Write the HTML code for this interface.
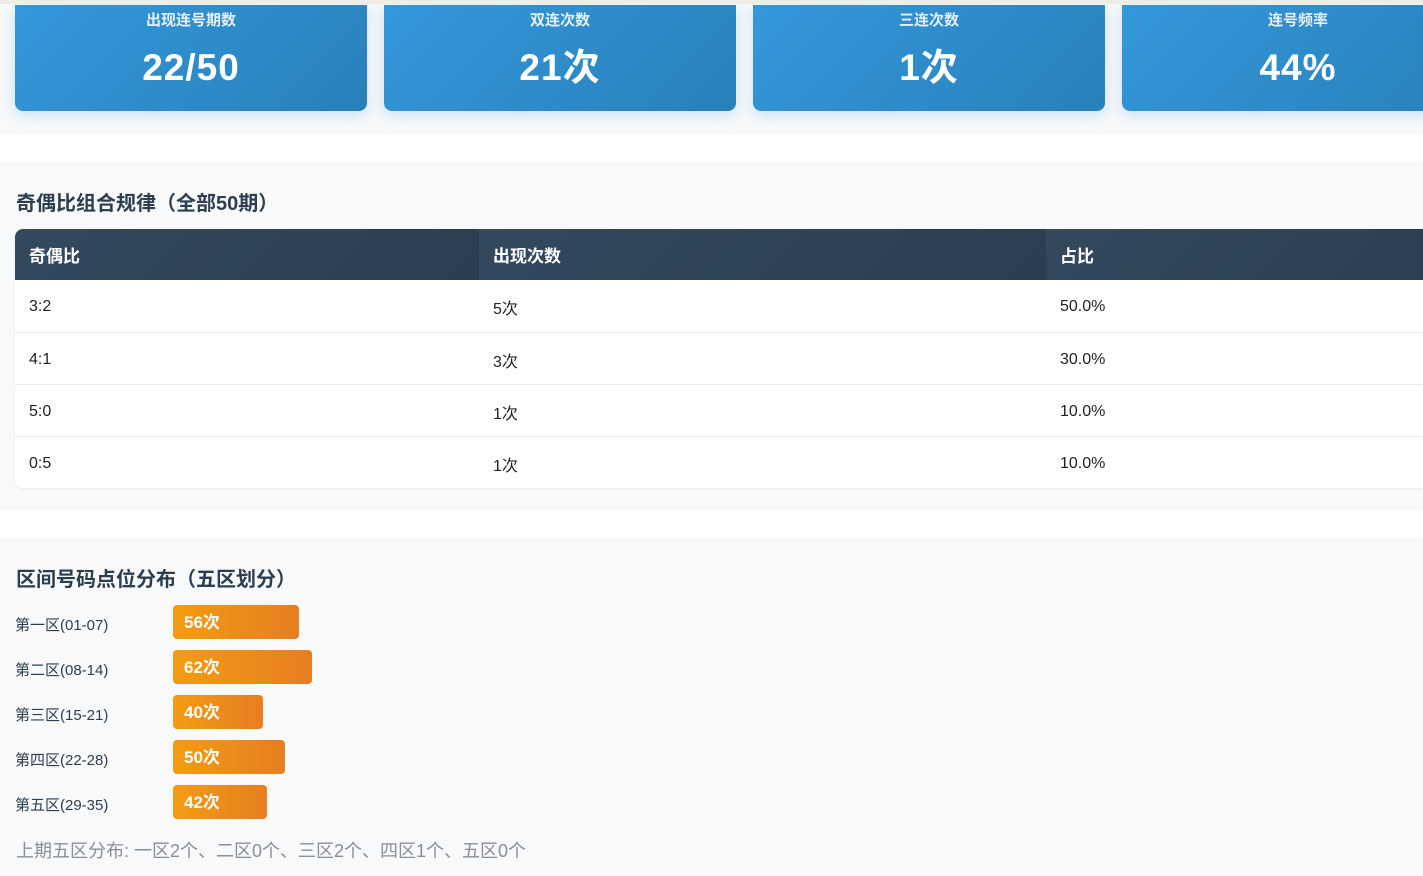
<!DOCTYPE html>
<html><head><meta charset="utf-8"><style>
*{margin:0;padding:0;box-sizing:border-box}
body{width:1423px;height:876px;overflow:hidden;background:#fff;font-family:"Liberation Sans","Noto Sans CJK SC",sans-serif;position:relative}
.topline{position:absolute;top:0;left:0;width:1423px;height:4px;background:#eeeee4;z-index:5}
.sec{position:absolute;left:0;width:1423px;background:#f8f9fa}
.card{position:absolute;top:5px;width:352px;height:106px;border-radius:0 0 8px 8px;background:linear-gradient(135deg,#3498db,#2980b9);box-shadow:0 4px 14px rgba(52,152,219,.25);color:#fff;text-align:center}
.card .l{font-size:15px;font-weight:bold;color:#e6f0fa;margin-top:6px;line-height:20px}
.card .v{font-size:37px;font-weight:bold;margin-top:17px;line-height:40px;letter-spacing:1px}
h3{position:absolute;left:16px;font-size:20px;color:#2c3e50;font-weight:bold}
table{position:absolute;left:15px;top:229px;width:1460px;border-collapse:collapse;background:#fff;border-radius:8px;overflow:hidden;box-shadow:0 1px 2px rgba(0,0,0,.06)}
th{height:51px;background:linear-gradient(135deg,#34495e,#2c3e50);color:#fff;text-align:left;padding-left:14px;font-size:17px;font-weight:bold}
td{height:52px;padding-left:14px;padding-top:3px;font-size:16px;color:#222;border-bottom:1px solid #eaeaea}
tr:last-child td{border-bottom:none}
.row{position:absolute;left:15px;height:34px;width:600px}
.row .lab{position:absolute;left:0;top:9px;font-size:15px;color:#2c3e50}
.row .bar{position:absolute;left:158px;top:0;height:34px;border-radius:4px;background:linear-gradient(90deg,#f39c12,#e67e22);color:#fff;font-weight:bold;font-size:17px;line-height:36px;padding-left:11px}
.note{position:absolute;left:16px;top:837px;font-size:18px;color:#8a8f94}
</style></head><body>
<div class="topline"></div>
<div class="sec" style="top:0;height:134px"></div>
<div class="card" style="left:15px"><div class="l">出现连号期数</div><div class="v">22/50</div></div>
<div class="card" style="left:384px"><div class="l">双连次数</div><div class="v">21次</div></div>
<div class="card" style="left:753px"><div class="l">三连次数</div><div class="v">1次</div></div>
<div class="card" style="left:1122px"><div class="l">连号频率</div><div class="v">44%</div></div>

<div class="sec" style="top:162px;height:348px"></div>
<h3 style="top:187px">奇偶比组合规律（全部50期）</h3>
<table>
<tr><th style="width:464px">奇偶比</th><th style="width:567px">出现次数</th><th>占比</th></tr>
<tr><td>3:2</td><td>5次</td><td>50.0%</td></tr>
<tr><td>4:1</td><td>3次</td><td>30.0%</td></tr>
<tr><td>5:0</td><td>1次</td><td>10.0%</td></tr>
<tr><td>0:5</td><td>1次</td><td>10.0%</td></tr>
</table>

<div class="sec" style="top:538px;height:338px"></div>
<h3 style="top:563px">区间号码点位分布（五区划分）</h3>
<div class="row" style="top:605px"><div class="lab">第一区(01-07)</div><div class="bar" style="width:126px">56次</div></div>
<div class="row" style="top:650px"><div class="lab">第二区(08-14)</div><div class="bar" style="width:139px">62次</div></div>
<div class="row" style="top:695px"><div class="lab">第三区(15-21)</div><div class="bar" style="width:90px">40次</div></div>
<div class="row" style="top:740px"><div class="lab">第四区(22-28)</div><div class="bar" style="width:112px">50次</div></div>
<div class="row" style="top:785px"><div class="lab">第五区(29-35)</div><div class="bar" style="width:94px">42次</div></div>
<div class="note">上期五区分布: 一区2个、二区0个、三区2个、四区1个、五区0个</div>
</body></html>
